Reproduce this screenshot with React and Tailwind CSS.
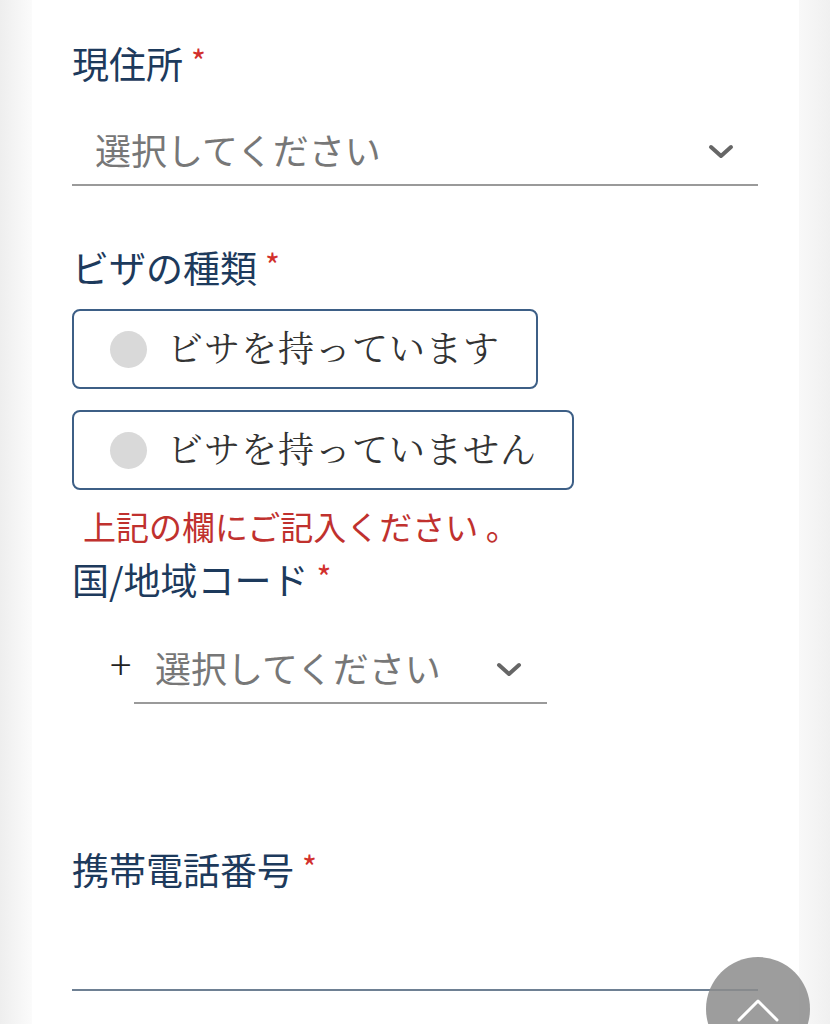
import React from 'react';

const sans = { fontFamily: '"Noto Sans CJK JP", "Noto Sans", sans-serif' };
const serif = { fontFamily: '"Noto Serif CJK JP", "Liberation Serif", "Noto Sans CJK JP", serif' };

function Label({ children, className = '' }) {
  return (
    <div className={`flex items-start h-[44px] text-[37px] leading-[44px] text-[#1d3a5c] ${className}`} style={sans}>
      <span>{children}</span>
      <span className="ml-[8px] mt-[4px] text-[32px] leading-[30px] text-[#d2302c]">*</span>
    </div>
  );
}

function Chevron() {
  return (
    <svg width="26" height="16" viewBox="0 0 26 16" fill="none">
      <polyline points="3,3 13,12 23,3" stroke="#666" strokeWidth="4" strokeLinecap="round" strokeLinejoin="round" />
    </svg>
  );
}

function Radio({ label, width }) {
  return (
    <div className={`flex items-center h-[80px] border-2 border-[#3d5f86] rounded-[8px] pl-[36px] ${width}`}>
      <span className="w-[37px] h-[37px] rounded-full bg-[#d9d9d9] shrink-0" />
      <span className="ml-[20px] pb-[4px] text-[36px] tracking-[1px] text-[#333] whitespace-nowrap" style={serif}>{label}</span>
    </div>
  );
}

export default function App() {
  return (
    <div className="relative h-[1024px] overflow-hidden flex bg-white">
      <div className="w-[32px] shrink-0 bg-gradient-to-r from-[#eeeeee] to-[#fbfbfb]" />
      <div className="flex-1 bg-white pl-[40px] pr-[41px] pt-[41px]">
        <Label>現住所</Label>

        <div className="mt-[35px] h-[66px] flex items-center justify-between border-b-2 border-[#9a9a9a] pl-[23px] pr-[24px]">
          <span className="text-[36px] text-[#777] pb-[6px]" style={sans}>選択してください</span>
          <Chevron />
        </div>

        <Label className="mt-[59px]">ビザの種類</Label>

        <div className="mt-[20px] flex flex-col gap-[21px]">
          <Radio label="ビサを持っています" width="w-[466px]" />
          <Radio label="ビサを持っていません" width="w-[502px]" />
        </div>

        <div className="mt-[16px] pl-[11px] h-[40px] text-[33px] leading-[40px] text-[#c0312e]" style={sans}>
          上記の欄にご記入ください 。
        </div>

        <Label className="mt-[11px]">国/地域コード</Label>

        <div className="mt-[37px] flex items-center pl-[38px]">
          <span className="text-[40px] font-light leading-[40px] text-[#222] w-[24px] -mt-[16px]" style={sans}>+</span>
          <div className="w-[413px] h-[66px] flex items-center justify-between border-b-2 border-[#9a9a9a] pl-[21px] pr-[25px]">
            <span className="text-[36px] text-[#777] pb-[6px]" style={sans}>選択してください</span>
            <Chevron />
          </div>
        </div>

        <Label className="mt-[143px]">携帯電話番号</Label>

        <div className="mt-[40px] h-[60px] border-b-2 border-[#6e8093]" />
      </div>
      <div className="w-[31px] shrink-0 bg-gradient-to-r from-[#f8f8f8] to-[#f0f0f0]" />

      <button className="absolute left-[706px] top-[957px] w-[104px] h-[104px] rounded-full bg-[#8c8c8c]/85 flex justify-center">
        <svg width="44" height="26" viewBox="0 0 44 26" className="mt-[40px]" fill="none">
          <polyline points="3,23 22,4 41,23" stroke="white" strokeWidth="3" strokeLinecap="round" strokeLinejoin="round" />
        </svg>
      </button>
    </div>
  );
}
